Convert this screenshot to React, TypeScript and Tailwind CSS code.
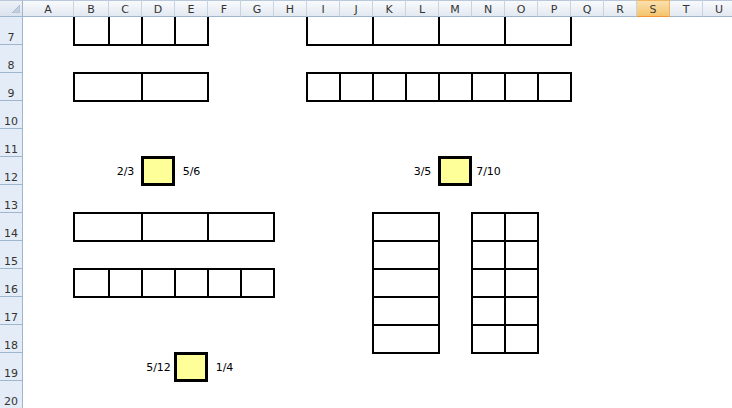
import clsx from "clsx";

const COLUMNS = [
  { label: "A", pos: "col-start-2" },
  { label: "B", pos: "col-start-3" },
  { label: "C", pos: "col-start-4" },
  { label: "D", pos: "col-start-5" },
  { label: "E", pos: "col-start-6" },
  { label: "F", pos: "col-start-7" },
  { label: "G", pos: "col-start-8" },
  { label: "H", pos: "col-start-9" },
  { label: "I", pos: "col-start-10" },
  { label: "J", pos: "col-start-11" },
  { label: "K", pos: "col-start-12" },
  { label: "L", pos: "col-start-13" },
  { label: "M", pos: "col-start-14" },
  { label: "N", pos: "col-start-15" },
  { label: "O", pos: "col-start-16" },
  { label: "P", pos: "col-start-17" },
  { label: "Q", pos: "col-start-18" },
  { label: "R", pos: "col-start-19" },
  { label: "S", pos: "col-start-20", selected: true },
  { label: "T", pos: "col-start-21" },
  { label: "U", pos: "col-start-22" },
];

const ROWS = [
  { label: "7", pos: "row-start-2" },
  { label: "8", pos: "row-start-3" },
  { label: "9", pos: "row-start-4" },
  { label: "10", pos: "row-start-5" },
  { label: "11", pos: "row-start-6" },
  { label: "12", pos: "row-start-7" },
  { label: "13", pos: "row-start-8" },
  { label: "14", pos: "row-start-9" },
  { label: "15", pos: "row-start-10" },
  { label: "16", pos: "row-start-11" },
  { label: "17", pos: "row-start-12" },
  { label: "18", pos: "row-start-13" },
  { label: "19", pos: "row-start-14" },
  { label: "20", pos: "row-start-15" },
];

// bordered cells: left border always, others as flagged
type BoxCell = { pos: string; t?: boolean; r?: boolean; b?: boolean };

const BOXES: BoxCell[] = [
  // row 7, B..E (top edge scrolled away)
  { pos: "row-start-2 col-start-3", t: false, b: true },
  { pos: "row-start-2 col-start-4", t: false, b: true },
  { pos: "row-start-2 col-start-5", t: false, b: true },
  { pos: "row-start-2 col-start-6", t: false, b: true, r: true },
  // row 7, I..P in pairs
  { pos: "row-start-2 col-start-10 col-span-2", t: false, b: true },
  { pos: "row-start-2 col-start-12 col-span-2", t: false, b: true },
  { pos: "row-start-2 col-start-14 col-span-2", t: false, b: true },
  { pos: "row-start-2 col-start-16 col-span-2", t: false, b: true, r: true },
  // row 9, B:C and D:E
  { pos: "row-start-4 col-start-3 col-span-2", b: true },
  { pos: "row-start-4 col-start-5 col-span-2", b: true, r: true },
  // row 9, I..P singles
  { pos: "row-start-4 col-start-10", b: true },
  { pos: "row-start-4 col-start-11", b: true },
  { pos: "row-start-4 col-start-12", b: true },
  { pos: "row-start-4 col-start-13", b: true },
  { pos: "row-start-4 col-start-14", b: true },
  { pos: "row-start-4 col-start-15", b: true },
  { pos: "row-start-4 col-start-16", b: true },
  { pos: "row-start-4 col-start-17", b: true, r: true },
  // row 14, thirds
  { pos: "row-start-9 col-start-3 col-span-2", b: true },
  { pos: "row-start-9 col-start-5 col-span-2", b: true },
  { pos: "row-start-9 col-start-7 col-span-2", b: true, r: true },
  // row 16, sixths
  { pos: "row-start-11 col-start-3", b: true },
  { pos: "row-start-11 col-start-4", b: true },
  { pos: "row-start-11 col-start-5", b: true },
  { pos: "row-start-11 col-start-6", b: true },
  { pos: "row-start-11 col-start-7", b: true },
  { pos: "row-start-11 col-start-8", b: true, r: true },
  // rows 14-18, K:L column of fifths
  { pos: "row-start-9 col-start-12 col-span-2", r: true },
  { pos: "row-start-10 col-start-12 col-span-2", r: true },
  { pos: "row-start-11 col-start-12 col-span-2", r: true },
  { pos: "row-start-12 col-start-12 col-span-2", r: true },
  { pos: "row-start-13 col-start-12 col-span-2", r: true, b: true },
  // rows 14-18, N and O tenths
  { pos: "row-start-9 col-start-15" },
  { pos: "row-start-9 col-start-16", r: true },
  { pos: "row-start-10 col-start-15" },
  { pos: "row-start-10 col-start-16", r: true },
  { pos: "row-start-11 col-start-15" },
  { pos: "row-start-11 col-start-16", r: true },
  { pos: "row-start-12 col-start-15" },
  { pos: "row-start-12 col-start-16", r: true },
  { pos: "row-start-13 col-start-15", b: true },
  { pos: "row-start-13 col-start-16", r: true, b: true },
];

const QUESTIONS = [
  { left: "2/3", leftPos: "row-start-7 col-start-4", box: "row-start-7 col-start-5", right: "5/6", rightPos: "row-start-7 col-start-6" },
  { left: "3/5", leftPos: "row-start-7 col-start-13", box: "row-start-7 col-start-14", right: "7/10", rightPos: "row-start-7 col-start-15" },
  { left: "5/12", leftPos: "row-start-14 col-start-5", box: "row-start-14 col-start-6", right: "1/4", rightPos: "row-start-14 col-start-7" },
];

export default function App() {
  return (
    <div className="w-[732px] h-[408px] overflow-hidden bg-white font-['DejaVu_Sans',sans-serif]">
      <div className="grid grid-cols-[23px_51px_35px_repeat(19,33px)] grid-rows-[17px_repeat(14,28px)]">
        {/* corner */}
        <div className="col-start-1 row-start-1 flex items-end justify-end pr-[2px] pb-[3px] bg-linear-to-b from-[#eef2f7] to-[#dbe3ee] border-t border-[#b9c9db] border-b border-b-[#9eb6ce] border-r border-r-[#9eb6ce]">
          <svg width="8" height="8" viewBox="0 0 8 8">
            <polygon points="8,0 8,8 0,8" fill="#c3cfdd" stroke="#a9bad0" strokeWidth="1" />
          </svg>
        </div>

        {/* column headers */}
        {COLUMNS.map((c) => (
          <div
            key={c.label}
            className={clsx(
              c.pos,
              "row-start-1 flex items-center justify-center pt-[2px] text-[11px] leading-none border-t border-b border-r",
              c.selected
                ? "bg-linear-to-b from-[#fae0ad] to-[#f5c46c] border-t-[#f2b45c] border-b-[#f29536] border-r-[#f3b360] text-[#3a3a3a]"
                : "bg-linear-to-b from-[#f8fafc] to-[#e3e9f1] border-t-[#b9c9db] border-b-[#9eb6ce] border-r-[#c7d3e1] text-[#333]"
            )}
          >
            {c.label}
          </div>
        ))}

        {/* row headers */}
        {ROWS.map((r) => (
          <div
            key={r.label}
            className={clsx(
              r.pos,
              "col-start-1 flex items-end justify-center pb-px text-[11px] leading-none text-[#333] bg-[#e4ecf7] border-b border-b-[#9eb6ce] border-r border-r-[#9eb6ce]"
            )}
          >
            {r.label}
          </div>
        ))}

        {/* bordered answer cells */}
        {BOXES.map((c, i) => (
          <div
            key={i}
            className={clsx(
              c.pos,
              "border-black border-l-2 -ml-px",
              c.t !== false && "border-t-2 -mt-px",
              c.r && "border-r-2 -mr-px",
              c.b && "border-b-2 -mb-px"
            )}
          />
        ))}

        {/* fraction comparisons */}
        {QUESTIONS.map((q) => (
          <div key={q.left} className="contents">
            <div className={clsx(q.leftPos, "flex items-center justify-center text-[11px] leading-none text-black")}>
              {q.left}
            </div>
            <div className={clsx(q.box, "-ml-px -mt-px -mb-px border-[3px] border-black bg-[#ffff99]")} />
            <div className={clsx(q.rightPos, "flex items-center justify-center text-[11px] leading-none text-black")}>
              {q.right}
            </div>
          </div>
        ))}
      </div>
    </div>
  );
}
